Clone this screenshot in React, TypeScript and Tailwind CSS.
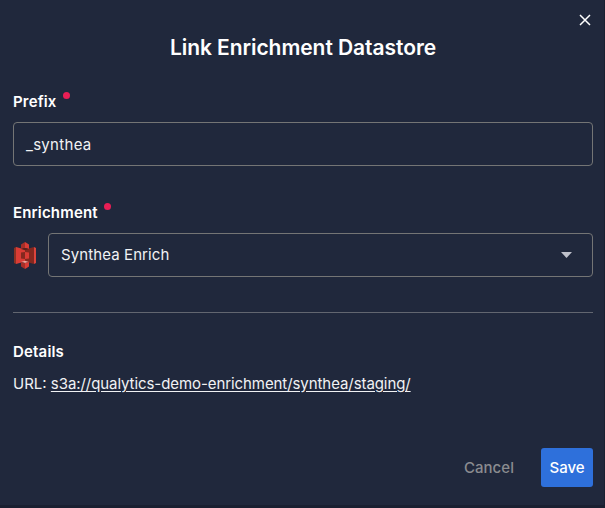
function RequiredLabel({ text }: { text: string }) {
  return (
    <div className="flex h-6 items-start gap-[6px]">
      <span className="text-[15px] leading-6 font-semibold tracking-[0.17px]">{text}</span>
      <span className="mt-[2px] size-[7px] rounded-full bg-[#e91e55]" />
    </div>
  );
}

function StorageIcon() {
  return (
    <svg className="ml-px h-[27px] w-[22px] shrink-0" viewBox="0 0 22 27">
      <path d="M0 6 2 5v17l-2-1z" fill="#8c3123" />
      <path d="m2 5 9 2.500v12L2 22z" fill="#d93c35" />
      <path d="m20 5-9 2.500v12L20 22z" fill="#84281f" />
      <path d="m20 5 2 1v15l-2 1z" fill="#dc443c" />
      <path d="M11 0 7 2.500V7l4-1z" fill="#a52f28" />
      <path d="m11 0 4 2.500V7l-4-1z" fill="#d93c35" />
      <path d="m7 7 4 1.200L15 7l-4-1z" fill="#5e1f18" />
      <path d="m7 10.500 4-.5v7l-4-.5z" fill="#84281f" />
      <path d="m11 10 4 .5v6l-4 .5z" fill="#d93c35" />
      <path d="m7 20 4-1.200L15 20l-4 1z" fill="#efa59d" />
      <path d="m7 20 4 1v6l-4-2.500z" fill="#a52f28" />
      <path d="m15 20-4 1v6l4-2.500z" fill="#d93c35" />
    </svg>
  );
}

export default function App() {
  return (
    <div className="flex h-[508px] w-[605px] flex-col border-r border-b-3 border-[#1a2031] bg-[#20283c] pr-[11px] pl-[13px] font-['Inter','Liberation_Sans',sans-serif] text-white">
      <div className="flex h-9 justify-end pt-[14px]">
        <svg className="mr-[2px] size-3" viewBox="0 0 12 12" stroke="white" strokeWidth="1.5">
          <path d="m1 1 10 10M11 1 1 11" />
        </svg>
      </div>
      <h1 className="h-6 text-center text-[21px] leading-6 font-semibold tracking-[-0.06px]">Link Enrichment Datastore</h1>

      <div className="mt-[30px]">
        <RequiredLabel text="Prefix" />
      </div>
      <div className="mt-2 flex h-11 items-center rounded border border-[#747575] px-3 pt-[2px] text-[15px] tracking-[0.3px] text-[#f1f2f4]">
        _synthea
      </div>

      <div className="mt-[35px]">
        <RequiredLabel text="Enrichment" />
      </div>
      <div className="mt-2 flex items-center gap-3">
        <StorageIcon />
        <div className="flex h-11 flex-1 items-center justify-between rounded border border-[#747575] pr-5 pl-3 text-[15px] tracking-[0.1px] text-[#f1f2f4]">
          Synthea Enrich
          <svg className="h-[6px] w-[11px]" viewBox="0 0 11 6" fill="#bfc1cb">
            <path d="M0 0h11L5.500 6z" />
          </svg>
        </div>
      </div>

      <hr className="mt-[35px] border-[#626670]" />
      <h2 className="mt-[27px] text-[15px] leading-6 font-semibold tracking-[0.18px]">Details</h2>
      <p className="mt-2 text-[15px] leading-6 text-[#f1f2f4]">
        URL: <a className="tracking-[-0.075px] underline underline-offset-2">s3a://qualytics-demo-enrichment/synthea/staging/</a>
      </p>

      <div className="mt-[52px] flex h-[39px] items-center justify-end gap-[27px] text-[15px] font-medium">
        <button className="pt-[2px] tracking-[0.05px] text-[#8b8c90]">Cancel</button>
        <button className="h-[39px] w-[52px] rounded-[3px] bg-[#2e70db] pt-[2px]">Save</button>
      </div>
    </div>
  );
}
